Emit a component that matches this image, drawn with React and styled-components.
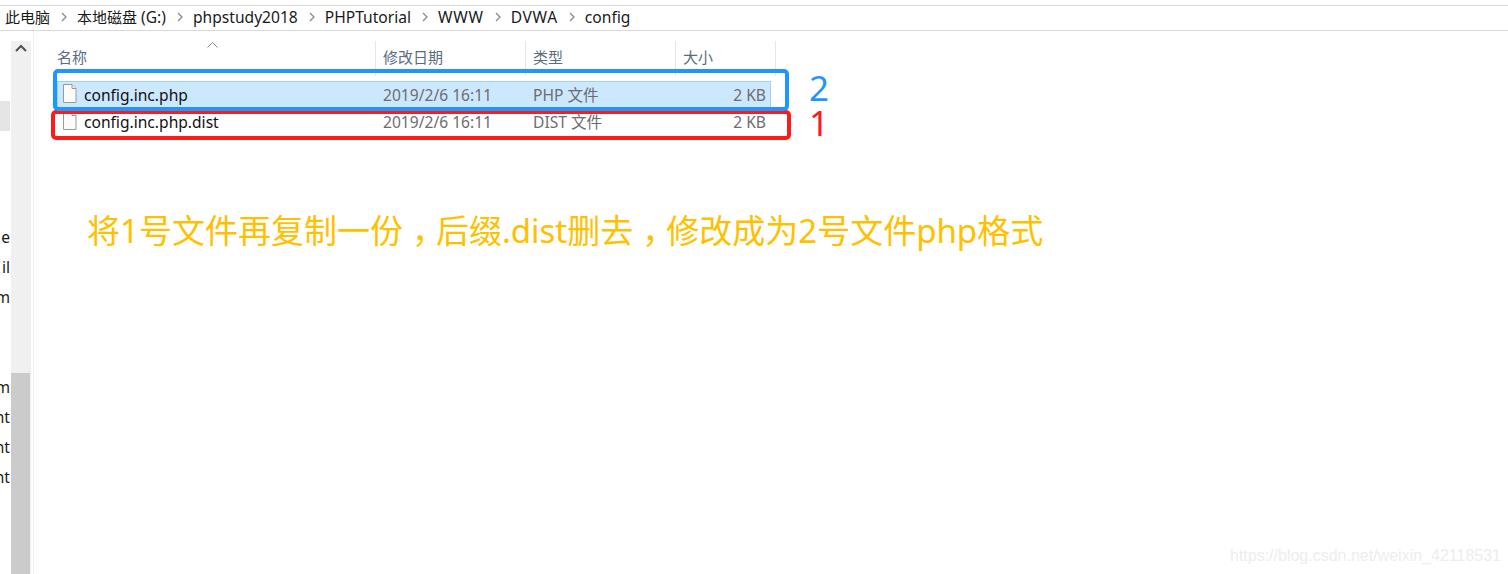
import React from 'react';
import styled, { createGlobalStyle } from 'styled-components';

const GlobalStyle = createGlobalStyle`
  html, body {
    margin: 0;
    padding: 0;
    background: #fff;
    height: 100%;
    overflow: hidden;
  }
  body {
    font-family: "Noto Sans", "Noto Sans CJK SC", sans-serif;
  }
`;

const Page = styled.div`
  width: 1508px;
  height: 574px;
  display: flex;
  flex-direction: column;
  position: relative;
  overflow: hidden;
  padding-top: 5px;
  box-sizing: border-box;
`;

const AddressBar = styled.div`
  height: 26px;
  box-sizing: border-box;
  flex: none;
  display: flex;
  align-items: center;
  padding: 0 0 2px 5px;
  border-top: 1px solid #d9d9d9;
  border-bottom: 1px solid #d9d9d9;
  font-size: 15.6px;
  color: #1a1a1a;
`;

const Crumb = styled.span`
  white-space: nowrap;
  letter-spacing: ${(p) => (p.$spaced ? '0.7px' : 'normal')};
`;

const Han = styled.span`
  font-size: 15px;
`;

const Chevron = styled.svg`
  width: 27px;
  height: 10px;
  flex: none;
  fill: none;
  stroke: #8a8a8a;
  stroke-width: 1.3;
`;

const Body = styled.div`
  flex: 1;
  display: flex;
  min-height: 0;
`;

const NavPane = styled.div`
  width: 11px;
  flex: none;
  overflow: hidden;
  padding-top: 70px;
  box-sizing: border-box;
`;

const NavRow = styled.div`
  height: 30px;
  width: 10px;
  box-sizing: border-box;
  padding-top: 2px;
  display: flex;
  justify-content: flex-end;
  align-items: center;
  font-size: 15.6px;
  color: #1a1a1a;
  white-space: nowrap;
  background: ${(p) => (p.$active ? '#e5e5e5' : 'transparent')};
`;

const ScrollTrack = styled.div`
  width: 20px;
  flex: none;
  margin-top: 10px;
  background: #f0f0f0;
  display: flex;
  flex-direction: column;
`;

const ScrollArrow = styled.svg`
  width: 20px;
  height: 16px;
  flex: none;
  fill: none;
  stroke: #505050;
  stroke-width: 2;
`;

const ScrollThumb = styled.div`
  margin-top: auto;
  height: 201px;
  width: 19px;
  background: #cbcbcb;
`;

const Content = styled.div`
  flex: 1;
  margin-left: 2px;
  border-left: 1px solid #f2f2f2;
  padding-left: 23px;
  padding-top: 10px;
`;

const FileTable = styled.div`
  position: relative;
  width: 718px;
`;

const HeaderRow = styled.div`
  height: 40px;
  display: grid;
  grid-template-columns: 319px 150px 150px 100px;
  position: relative;
`;

const HeaderCell = styled.div`
  border-right: 1px solid #e5e5e5;
  padding: 6px 0 0 ${(p) => (p.$first ? 0 : 7)}px;
  height: 29px;
  font-size: 15px;
  line-height: 20px;
  color: #5b6b80;
`;

const SortCaret = styled.svg`
  position: absolute;
  left: 150px;
  top: 1px;
  width: 11px;
  height: 6px;
  fill: none;
  stroke: #8a8a8a;
  stroke-width: 1;
`;

const FileRow = styled.div`
  height: 27px;
  box-sizing: border-box;
  width: 714px;
  display: grid;
  grid-template-columns: 318px 150px 150px 96px;
  align-items: center;
  font-size: 15.6px;
  color: #6d6d6d;
  background: ${(p) => (p.$selected ? '#cce8ff' : 'transparent')};
  border: 1px solid ${(p) => (p.$selected ? '#99d1ff' : 'transparent')};
`;

const NameCell = styled.div`
  display: flex;
  align-items: center;
  gap: 7px;
  padding-left: 4px;
  color: #111;
`;

const FileIcon = styled.svg`
  width: 15px;
  height: 19px;
  flex: none;
  margin-bottom: 3px;
`;

const TextCell = styled.div`
  padding-left: 7px;
`;

const SizeCell = styled.div`
  text-align: right;
  padding-right: 6px;
`;

const Frame = styled.div`
  position: absolute;
  left: ${(p) => p.$left}px;
  top: ${(p) => p.$top}px;
  width: ${(p) => p.$width}px;
  height: ${(p) => p.$height}px;
  box-sizing: border-box;
  border: 4px solid ${(p) => p.$color};
  border-radius: 5px;
`;

const Numeral = styled.span`
  position: absolute;
  left: 752px;
  top: ${(p) => p.$top}px;
  font-family: "Noto Sans", sans-serif;
  font-size: 35px;
  line-height: 30px;
  color: ${(p) => p.$color};
`;

const Note = styled.div`
  margin-top: 74px;
  margin-left: 30px;
  font-family: "Noto Sans", "Noto Sans CJK SC", sans-serif;
  font-size: 33px;
  line-height: 44px;
  color: #ffc000;
  white-space: nowrap;
`;

const NoteComma = styled.span`
  margin-left: 9px;
  margin-right: -9px;
`;

const Watermark = styled.div`
  position: absolute;
  right: 7px;
  bottom: 9px;
  font-family: "Liberation Sans", sans-serif;
  font-size: 16px;
  color: #ededed;
`;

const crumbs = [
  { key: 'pc', label: <Han>此电脑</Han> },
  { key: 'disk', label: <><Han>本地磁盘</Han> (G:)</> },
  { key: 'study', label: 'phpstudy2018' },
  { key: 'tutorial', label: 'PHPTutorial' },
  { key: 'www', label: 'WWW', spaced: true },
  { key: 'dvwa', label: 'DVWA', spaced: true },
  { key: 'config', label: 'config' },
];
const navLabels = ['', '', '', '', 'e', 'il', 'm', '', '', 'm', 'nt', 'nt', 'nt'];
const files = [
  { name: 'config.inc.php', type: 'PHP 文件', selected: true },
  { name: 'config.inc.php.dist', type: 'DIST 文件' },
];

function PageIcon() {
  return (
    <FileIcon viewBox="0 0 15 19">
      <path d="M1.5 .5h8.5l4 4v14h-12.5z" fill="#fbfbfb" stroke="#9a9a9a" />
      <path d="M10 .5v4h4" fill="#eee" stroke="#9a9a9a" />
    </FileIcon>
  );
}

export default function App() {
  return (
    <Page>
      <GlobalStyle />
      <AddressBar>
        {crumbs.map((crumb, i) => (
          <React.Fragment key={crumb.key}>
            {i > 0 && (
              <Chevron viewBox="0 0 27 10">
                <path d="M12 1l4 4-4 4" />
              </Chevron>
            )}
            <Crumb $spaced={crumb.spaced}>{crumb.label}</Crumb>
          </React.Fragment>
        ))}
      </AddressBar>
      <Body>
        <NavPane>
          {navLabels.map((label, i) => (
            <NavRow key={i} $active={i === 0}>{label}</NavRow>
          ))}
        </NavPane>
        <ScrollTrack>
          <ScrollArrow viewBox="0 0 20 16">
            <path d="M5 10l5-5 5 5" />
          </ScrollArrow>
          <ScrollThumb />
        </ScrollTrack>
        <Content>
          <FileTable>
            <HeaderRow>
              <SortCaret viewBox="0 0 11 6">
                <path d="M.5 5.5l5-5 5 5" />
              </SortCaret>
              <HeaderCell $first>名称</HeaderCell>
              <HeaderCell>修改日期</HeaderCell>
              <HeaderCell>类型</HeaderCell>
              <HeaderCell>大小</HeaderCell>
            </HeaderRow>
            {files.map((file) => (
              <FileRow key={file.name} $selected={file.selected}>
                <NameCell>
                  <PageIcon />
                  {file.name}
                </NameCell>
                <TextCell>2019/2/6 16:11</TextCell>
                <TextCell>{file.type}</TextCell>
                <SizeCell>2 KB</SizeCell>
              </FileRow>
            ))}
            <Frame $left={-6} $top={69} $width={740} $height={30} $color="#ff1a1a" />
            <Frame $left={-4} $top={28} $width={736} $height={42} $color="#1e96ff" />
            <Numeral $top={32} $color="#1e96ff">2</Numeral>
            <Numeral $top={67} $color="#ff1a1a">1</Numeral>
          </FileTable>
          <Note>
            将1号文件再复制一份<NoteComma>，</NoteComma>后缀.dist删去<NoteComma>，</NoteComma>修改成为2号文件php格式
          </Note>
        </Content>
      </Body>
      <Watermark>https://blog.csdn.net/weixin_42118531</Watermark>
    </Page>
  );
}
